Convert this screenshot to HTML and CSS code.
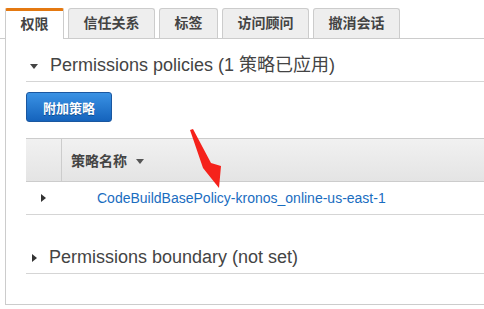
FILE: index.html
```html
<!DOCTYPE html>
<html lang="zh">
<head>
  <meta charset="UTF-8" />
  <meta name="viewport" content="width=device-width, initial-scale=1.0" />
  <title>权限</title>
  <link rel="stylesheet" href="styles.css">
</head>
<body>
  <div class="tabs">
    <div class="tab active">权限</div>
    <div class="tab">信任关系</div>
    <div class="tab">标签</div>
    <div class="tab">访问顾问</div>
    <div class="tab">撤消会话</div>
  </div>

  <div class="panel">
    <h2 class="section-title">
      <span class="caret-down"></span>
      Permissions policies (1 策略已应用)
    </h2>

    <button class="btn-primary">附加策略</button>

    <div class="policy-table">
      <div class="table-head">
        <div class="col-toggle"></div>
        <div class="col-name">策略名称 <span class="sort-caret"></span></div>
      </div>
      <div class="table-row">
        <div class="col-toggle"><span class="caret-right"></span></div>
        <a class="policy-link" href="#">CodeBuildBasePolicy-kronos_online-us-east-1</a>
      </div>
    </div>

    <h2 class="section-title boundary">
      <span class="caret-right small"></span>
      Permissions boundary (not set)
    </h2>
  </div>

  <!-- annotation arrow -->
  <svg class="arrow" width="40" height="70" viewBox="0 0 40 70">
    <polygon points="2,5 5,4 23,38 33,41 31,63 15,43" fill="#f5221b" />
  </svg>
</body>
</html>
```

FILE: styles.css
```css
* {
  box-sizing: border-box;
  margin: 0;
  padding: 0;
}

body {
  font-family: "Liberation Sans", "Noto Sans CJK SC", sans-serif;
  background: #ffffff;
  color: #444;
  overflow: hidden;
  position: relative;
}

.tabs {
  display: flex;
  gap: 4px;
  padding: 8px 0 0 5px;
  border-bottom: 1px solid #ccc;
}

.tab {
  height: 30px;
  line-height: 29px;
  padding: 0 14.5px;
  font-size: 14px;
  font-weight: bold;
  color: #444;
  background: #eeeeee;
  border: 1px solid #cccccc;
  border-bottom: none;
  border-radius: 3px 3px 0 0;
  margin-bottom: -1px;
}

.tab.active {
  background: #ffffff;
  border-top: 3px solid #e47911;
  line-height: 27px;
  height: 31px;
  border-radius: 2px 2px 0 0;
}

.panel {
  margin-left: 5px;
  border-left: 1px solid #ccc;
  border-bottom: 1px solid #ccc;
  padding: 15px 0 30px 20px;
}

.section-title {
  display: flex;
  align-items: center;
  font-size: 18px;
  font-weight: normal;
  line-height: 22px;
  color: #444;
  padding-bottom: 5px;
  border-bottom: 1px solid #d5d5d5;
}

.caret-down {
  width: 0;
  height: 0;
  border-left: 4.5px solid transparent;
  border-right: 4.5px solid transparent;
  border-top: 5px solid #444;
  margin: 2px 12px 0 4px;
}

.caret-right {
  display: inline-block;
  width: 0;
  height: 0;
  border-top: 4px solid transparent;
  border-bottom: 4px solid transparent;
  border-left: 5px solid #333;
}

.caret-right.small {
  margin: 2px 12px 0 6px;
}

.btn-primary {
  display: block;
  margin-top: 10px;
  width: 86px;
  height: 30px;
  font-family: inherit;
  font-size: 13px;
  font-weight: bold;
  color: #ffffff;
  text-shadow: 0 1px 0 #0b4d92;
  background: linear-gradient(to bottom, #3a92e4, #1563bc);
  border: 1px solid #1a57a0;
  border-radius: 3px;
}

.policy-table {
  margin-top: 16px;
}

.table-head {
  display: flex;
  height: 44px;
  background: linear-gradient(to bottom, #f1f1f1, #e4e4e4);
  border-top: 1px solid #ccc;
  border-bottom: 1px solid #ccc;
}

.col-toggle {
  width: 36px;
  flex-shrink: 0;
  display: flex;
  align-items: center;
  justify-content: center;
}

.table-head .col-toggle {
  border-right: 1px solid #ccc;
}

.col-name {
  display: flex;
  align-items: center;
  padding-left: 9px;
  font-size: 14px;
  font-weight: bold;
  color: #444;
}

.sort-caret {
  width: 0;
  height: 0;
  margin: 2px 0 0 9px;
  border-left: 4.5px solid transparent;
  border-right: 4.5px solid transparent;
  border-top: 5px solid #555;
}

.table-row {
  display: flex;
  align-items: center;
  height: 33px;
  border-bottom: 1px solid #d5d5d5;
}

.table-row .caret-right {
  margin-left: -2px;
}

.policy-link {
  margin-left: 35px;
  font-size: 14px;
  color: #1a6dbf;
  text-decoration: none;
}

.section-title.boundary {
  margin-top: 31px;
}

.arrow {
  position: absolute;
  left: 188px;
  top: 125px;
}
```
